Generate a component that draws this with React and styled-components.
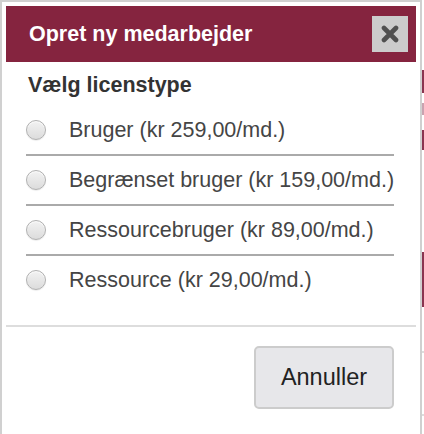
import React from "react";
import styled, { createGlobalStyle } from "styled-components";

const Global = createGlobalStyle`
  html, body { margin: 0; padding: 0; background: #ffffff; }
  body { font-family: "Liberation Sans", Arial, Helvetica, sans-serif; overflow: hidden; }
`;

const Page = styled.div`
  display: flex;
  width: 424px;
  height: 434px;
  overflow: hidden;
`;

const Dialog = styled.div`
  width: 410px;
  min-height: 450px;
  flex: none;
  box-sizing: content-box;
  border: 2px solid #d0d0d0;
  border-bottom: none;
  background: #ffffff;
  padding: 4px 4px 0 4px;
  display: flex;
  flex-direction: column;
`;

const Backdrop = styled.div`
  flex: 1;
  display: flex;
  flex-direction: column;
`;

const Mark = styled.div`
  height: ${(p) => p.$h}px;
  margin-top: ${(p) => p.$top}px;
  background: ${(p) => p.$color};
`;

const Header = styled.div`
  height: 56px;
  background: #85243f;
  display: flex;
  align-items: center;
  justify-content: space-between;
  padding: 0 8px 0 23px;
`;

const Title = styled.h1`
  margin: 0;
  font-size: 21.5px;
  font-weight: bold;
  color: #ffffff;
  line-height: 25px;
`;

const CloseButton = styled.button`
  width: 36px;
  height: 36px;
  border: none;
  padding: 0;
  background: #cccccc;
  display: flex;
  align-items: center;
  justify-content: center;
`;

const Body = styled.div`
  padding: 11px 22px 0 20px;
  display: flex;
  flex-direction: column;
`;

const Heading = styled.div`
  font-size: 21.5px;
  font-weight: bold;
  line-height: 25px;
  color: #333333;
  padding-left: 2px;
  margin-bottom: 8px;
`;

const Option = styled.label`
  height: 48px;
  display: flex;
  align-items: center;
  gap: 23px;
  border-bottom: ${(p) => (p.$last ? "none" : "2px solid #aaaaaa")};
`;

const Radio = styled.span`
  width: 18px;
  height: 18px;
  border-radius: 50%;
  border: 1px solid #b0b0b0;
  background: linear-gradient(#f2f2f2, #dcdcdc);
  box-shadow: inset 0 1px 1px rgba(255, 255, 255, 0.8), 0 1px 1px rgba(0, 0, 0, 0.08);
  flex: none;
`;

const LabelText = styled.span`
  font-size: 21.5px;
  line-height: 25px;
  color: #454545;
  white-space: nowrap;
`;

const Footer = styled.div`
  margin-top: 21px;
  border-top: 2px solid #dddddd;
  padding: 19px 22px 0 0;
  display: flex;
  justify-content: flex-end;
`;

const CancelButton = styled.button`
  width: 140px;
  height: 63px;
  box-sizing: border-box;
  border: 2px solid #cccccc;
  border-radius: 5px;
  background: #e7e7ea;
  font-family: "Liberation Sans", Arial, Helvetica, sans-serif;
  font-size: 23.5px;
  color: #222222;
  padding: 0;
`;

const options = [
  "Bruger (kr 259,00/md.)",
  "Begrænset bruger (kr 159,00/md.)",
  "Ressourcebruger (kr 89,00/md.)",
  "Ressource (kr 29,00/md.)",
];

export default function App() {
  return (
    <>
      <Global />
      <Page>
        <Dialog>
          <Header>
            <Title>Opret ny medarbejder</Title>
            <CloseButton aria-label="Luk">
              <svg width="18" height="18" viewBox="0 0 18 18">
                <path d="M3 3 L15 15 M15 3 L3 15" stroke="#505050" strokeWidth="4.6" strokeLinecap="round" fill="none" />
              </svg>
            </CloseButton>
          </Header>
          <Body>
            <Heading>Vælg licenstype</Heading>
            {options.map((o, i) => (
              <Option key={o} $last={i === options.length - 1}>
                <Radio />
                <LabelText>{o}</LabelText>
              </Option>
            ))}
          </Body>
          <Footer>
            <CancelButton>Annuller</CancelButton>
          </Footer>
        </Dialog>
        <Backdrop>
          <Mark $top={70} $h={23} $color="#8a3550" />
          <Mark $top={10} $h={12} $color="#c9a3b0" />
          <Mark $top={15} $h={20} $color="#8a3550" />
          <Mark $top={102} $h={55} $color="#8a3550" />
          <Mark $top={44} $h={2} $color="#dddddd" />
          <Mark $top={61} $h={2} $color="#dddddd" />
        </Backdrop>
      </Page>
    </>
  );
}
